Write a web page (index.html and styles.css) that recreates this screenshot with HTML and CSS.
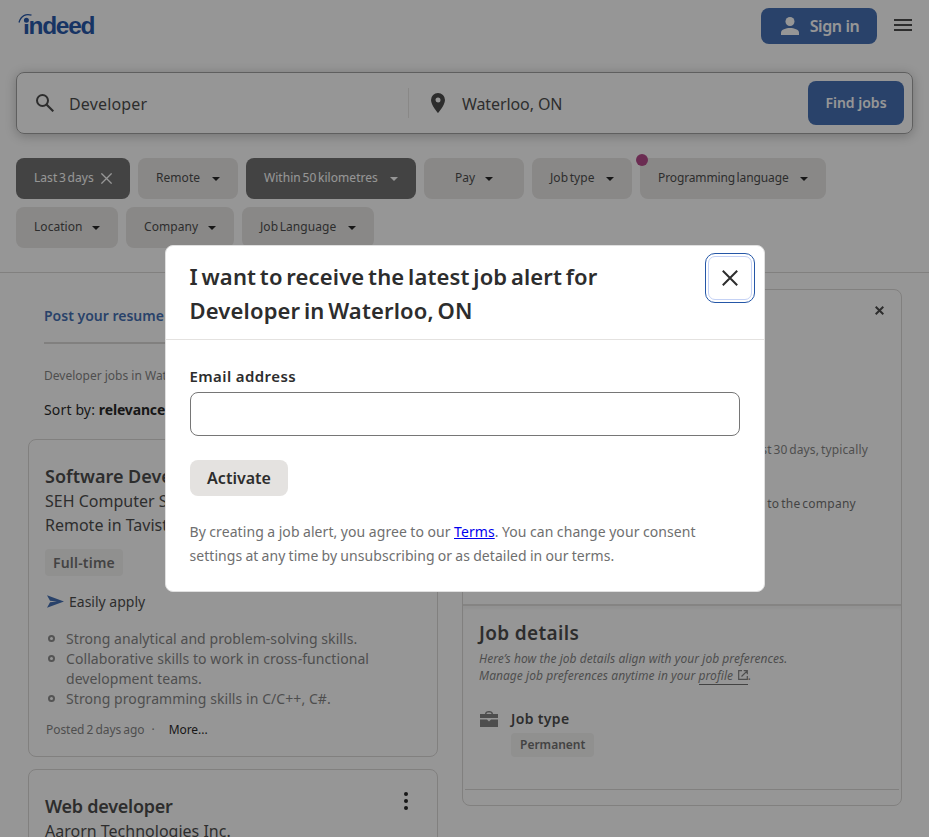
FILE: index.html
```html
<!DOCTYPE html>
<html lang="en">
<head>
<meta charset="utf-8">
<title>Developer jobs in Waterloo, ON | Indeed</title>
<link rel="stylesheet" href="styles.css">
</head>
<body>
<div class="page">
  <header class="header">
    <div class="logo">
      <span class="logo-text">ındeed</span>
      <svg class="logo-arc" width="20" height="14" viewBox="0 0 20 14"><path d="M1 9.500C3 2.500 8 .5 13.500 2.200" fill="none" stroke="#003a9b" stroke-width="1.300"/><circle cx="8.400" cy="7.200" r="3.200" fill="#003a9b" stroke="#fff" stroke-width="1.400"/></svg>
    </div>
    <div class="header-actions">
      <button class="btn signin"><svg width="18" height="18" viewBox="0 0 18 18"><circle cx="9" cy="4.500" r="4.500" fill="currentColor"/><path d="M0 18v-2.500C0 12.500 5 11 9 11s9 1.500 9 4.500V18z" fill="currentColor"/></svg><span>Sign in</span></button>
      <svg class="menu" width="18" height="12" viewBox="0 0 18 12"><path d="M0 0h18v2H0zM0 5h18v2H0zM0 10h18v2H0z" fill="#2d2d2d"/></svg>
    </div>
  </header>
  <div class="search">
    <div class="field what"><svg width="18" height="18" viewBox="0 0 18 18"><circle cx="6.500" cy="6.500" r="5.500" fill="none" stroke="#2d2d2d" stroke-width="2"/><path d="M10.500 10.500l6.800 6.800" stroke="#2d2d2d" stroke-width="2.200"/></svg><span>Developer</span></div>
    <div class="field where"><svg width="14" height="20" viewBox="0 0 14 20"><path fill="#2d2d2d" fill-rule="evenodd" d="M7 0a7 7 0 0 0-7 7c0 5.200 7 13 7 13s7-7.800 7-13a7 7 0 0 0-7-7zm0 4.500a2.500 2.500 0 1 1 0 5 2.500 2.500 0 0 1 0-5z"/></svg><span>Waterloo, ON</span></div>
    <button class="btn find">Find jobs</button>
  </div>
  <div class="filters">
    <div class="row">
      <div class="chip dark w114"><span>Last 3 days</span><svg width="11" height="11" viewBox="0 0 11 11"><path d="M.4.4l10.200 10.200M10.600.4L.4 10.600" stroke="#fff" stroke-width="1.300"/></svg></div>
      <div class="chip w100"><span>Remote</span><i></i></div>
      <div class="chip dark w170"><span>Within 50 kilometres</span><i></i></div>
      <div class="chip w100 pay"><span>Pay</span><i></i></div>
      <div class="chip w100"><span>Job type</span><i></i></div>
      <div class="chip w186 marked"><span>Programming language</span><i></i></div>
    </div>
    <div class="row">
      <div class="chip w102"><span>Location</span><i></i></div>
      <div class="chip w108"><span>Company</span><i></i></div>
      <div class="chip w132"><span>Job Language</span><i></i></div>
    </div>
  </div>
  <main class="content">
    <section class="results">
      <div class="intro">
        <a class="resume">Post your resume</a>
        <div class="jobs-in">Developer jobs in Waterloo, ON</div>
        <div class="sort">Sort by: <b>relevance</b></div>
      </div>
      <article class="card first">
        <h2>Software Developer</h2>
        <div class="line">SEH Computer Systems</div>
        <div class="line">Remote in Tavistock, ON</div>
        <span class="tag">Full-time</span>
        <div class="easy"><svg width="17" height="13" viewBox="0 0 17 13"><path d="M0 .3L17 6.500 0 12.700 3 7.300 10 6.500 3 5.700z" fill="#2557a7"/></svg><span>Easily apply</span></div>
        <ul>
          <li>Strong analytical and problem-solving skills.</li>
          <li>Collaborative skills to work in cross-functional<br>development teams.</li>
          <li>Strong programming skills in C/C++, C#.</li>
        </ul>
        <div class="meta"><span>Posted 2 days ago</span><span class="sep">·</span><a>More...</a></div>
      </article>
      <article class="card second">
        <div class="card-head"><h2>Web developer</h2><svg width="4" height="18" viewBox="0 0 4 18"><circle cx="2" cy="2" r="2"/><circle cx="2" cy="9" r="2"/><circle cx="2" cy="16" r="2"/></svg></div>
        <div class="line">Aarorn Technologies Inc.</div>
      </article>
    </section>
    <section class="detail">
      <div class="detail-top">
        <svg class="detail-close" width="9" height="9" viewBox="0 0 9 9"><path d="M.7.7l7.600 7.600M8.300.7L.7 8.300" stroke="#2d2d2d" stroke-width="2"/></svg>
        <p class="activity">past 30 days, typically</p>
        <p class="apply-note">applying to the company</p>
      </div>
      <div class="detail-body">
        <h3>Job details</h3>
        <p class="prefs">Here’s how the job details align with your job preferences.<br>Manage job preferences anytime in your <a>profile <svg width="10" height="10" viewBox="0 0 10 10"><path d="M4 .7H.7v8.600h8.600V6M5.700.7h3.600v3.600M9.200.8L3.500 6.500" fill="none" stroke="#6f6f6f" stroke-width="1.200"/></svg></a>.</p>
        <div class="jobtype">
          <svg width="18" height="16" viewBox="0 0 18 16"><path fill="#6f6f6f" fill-rule="evenodd" d="M5 3C5 1 6.500 0 9 0s4 1 4 3h5v4H0V3zm1.500 0h5C11.500 1.800 10.500 1.400 9 1.400S6.500 1.800 6.500 3zM0 8.500h7l2 2 2-2h7V16H0z"/></svg>
          <div><h4>Job type</h4><span class="tag small">Permanent</span></div>
        </div>
      </div>
      <div class="detail-rule"></div>
    </section>
  </main>
</div>
<div class="overlay">
  <div class="modal" role="dialog" aria-modal="true">
    <div class="modal-head">
      <h1>I want to receive the latest job alert for<br>Developer in Waterloo, ON</h1>
      <button class="close" aria-label="Close"><svg width="16" height="16" viewBox="0 0 16 16"><path d="M.8.8l14.400 14.400M15.200.8L.8 15.200" stroke="#2d2d2d" stroke-width="2"/></svg></button>
    </div>
    <div class="modal-body">
      <label for="email">Email address</label>
      <input id="email" type="email">
      <button class="activate">Activate</button>
      <p><span class="l1">By creating a job alert, you agree to our <a href="#">Terms</a>. You can change your consent</span><br><span class="l2">settings at any time by unsubscribing or as detailed in our terms.</span></p>
    </div>
  </div>
</div>
</body>
</html>
```

FILE: styles.css
```css
* { box-sizing: border-box; }
html, body { margin: 0; height: 837px; overflow: hidden; }
body { font-family: "Noto Sans", "Open Sans", sans-serif; color: #2d2d2d; background: #fff; white-space: nowrap; }
h1, h2, h3, h4, p, ul { margin: 0; padding: 0; }
button { font-family: inherit; border: 0; padding: 0; }
svg { display: block; flex: none; }

.page { height: 837px; overflow: hidden; }
.header { height: 52px; padding: 8px 17px 0 18px; display: flex; justify-content: space-between; align-items: flex-start; }
.logo { position: relative; height: 36px; }
.logo-text { display: block; margin-left: 5px; font: bold 24.500px/36px "Liberation Sans", sans-serif; letter-spacing: -1.300px; color: #003a9b; }
.logo-arc { position: absolute; left: 0; top: 5px; }
.header-actions { display: flex; align-items: center; gap: 17px; }
.menu { margin-top: -2px; }
.btn { background: #2557a7; color: #fff; border-radius: 8px; font-weight: 600; display: flex; align-items: center; justify-content: center; }
.signin { width: 116px; height: 36px; padding-left: 2px; gap: 11px; font-size: 16px; letter-spacing: -.4px; }

.search { margin: 20px 16px 0; height: 62px; border: 1px solid #919191; border-radius: 8px; display: flex; align-items: center; padding: 0 8px 0 19px; box-shadow: 0 2px 12px rgba(45, 45, 45, .35); }
.field { display: flex; align-items: center; height: 30px; font-size: 16px; }
.field span { margin-top: 2px; }
.what { width: 373px; gap: 15px; border-right: 1px solid #e4e2e0; letter-spacing: .15px; }
.where { flex: 1; padding-left: 22px; gap: 17px; letter-spacing: -.1px; }
.find { width: 96px; height: 44px; font-size: 14px; padding-bottom: 1px; }

.filters { height: 139px; padding: 24px 16px 0; border-bottom: 1px solid #d4d2d0; display: flex; flex-direction: column; gap: 8px; }
.row { display: flex; gap: 8px; }
.chip { height: 41px; border-radius: 8px; background: #e4e2e0; display: flex; align-items: center; justify-content: space-between; padding: 0 18px; font-size: 12px; word-spacing: -1.500px; position: relative; }
.chip span { margin-top: -2px; letter-spacing: .05px; }
.chip i { border: 4px solid transparent; border-top-color: #000; border-bottom: 0; margin-top: 1px; }
.dark { background: #595959; color: #fff; }
.dark i { border-top-color: #fff; }
.w100 { width: 100px; } .w102 { width: 102px; } .w108 { width: 108px; } .w114 { width: 114px; }
.w132 { width: 132px; } .w170 { width: 170px; } .w186 { width: 186px; }
.pay { padding: 0 31px; }
.marked span { letter-spacing: -.12px; }
.marked::before { content: ""; position: absolute; left: -4px; top: -4px; width: 12px; height: 12px; border-radius: 50%; background: #a92b76; }

.content { display: flex; padding: 16px 27px 0 28px; gap: 24px; align-items: flex-start; }
.results { width: 410px; }
.intro { height: 150px; padding: 16px 16px 0; }
.resume { display: block; height: 39px; border-bottom: 2px solid #d4d2d0; font-size: 14px; line-height: 22px; font-weight: 600; color: #2557a7; }
.jobs-in { margin-top: 22px; font-size: 12px; line-height: 20px; color: #6f6f6f; }
.sort { margin-top: 14px; font-size: 14px; line-height: 20px; color: #000; letter-spacing: .15px; }
.sort b { letter-spacing: -.15px; }
.card { border: 1px solid #d4d2d0; border-radius: 8px; padding: 23px 16px 0; }
.first { height: 318px; }
.second { height: 200px; margin-top: 12px; }
h2 { font-size: 18px; line-height: 26px; font-weight: 600; }
.second h2 { letter-spacing: -.25px; }
.line { font-size: 16px; line-height: 24px; }
.tag { display: block; width: 78px; height: 27px; margin-top: 12px; padding-left: 8px; border-radius: 4px; background: #f3f2f1; color: #595959; font-size: 14px; line-height: 27px; font-weight: 600; letter-spacing: .2px; }
.easy { display: flex; align-items: center; gap: 5px; padding-left: 2px; height: 20px; margin-top: 15px; font-size: 14px; }
.card ul { list-style: none; margin-top: 18px; font-size: 14px; line-height: 20px; letter-spacing: .07px; color: #6f6f6f; }
.card li { position: relative; padding-left: 21px; }
.card li::before { content: ""; box-sizing: border-box; position: absolute; left: 3px; top: 6px; width: 7px; height: 7px; border: 2px solid #7a7a7a; border-radius: 50%; }
.meta { display: flex; margin-top: 11px; padding-left: 1px; font-size: 12px; line-height: 20px; word-spacing: -1px; letter-spacing: -.05px; color: #6f6f6f; }
.meta .sep { margin: 0 14px 0 7px; }
.meta a { color: #000; }
.card-head { display: flex; justify-content: space-between; padding-right: 13px; }
.card-head svg { margin-top: -1px; }

.detail { width: 440px; height: 517px; border: 1px solid #d4d2d0; border-radius: 8px; }
.detail-top { height: 314px; padding: 17px 33px 0 0; text-align: right; }
.detail-close { margin: -1px -16px 0 auto; }
.activity { margin-top: 125px; font-size: 12px; line-height: 20px; letter-spacing: .15px; word-spacing: -1.500px; color: #6f6f6f; }
.apply-note { margin-top: 34px; padding-right: 12px; font-size: 12px; line-height: 20px; letter-spacing: .25px; word-spacing: -1.500px; color: #595959; }
.detail-body { height: 185px; padding: 14px 16px 0; border-top: 2px solid #dddbd9; box-shadow: inset 0 3px 3px rgba(0, 0, 0, .04); }
h3 { font-size: 19px; line-height: 26px; font-weight: 600; letter-spacing: .35px; }
.prefs { margin-top: 4px; font-size: 12px; line-height: 17px; letter-spacing: .05px; font-style: italic; color: #6f6f6f; }
.prefs a { display: inline-block; border-bottom: 1px solid #595959; }
.prefs svg { display: inline-block; margin-left: 2px; }
.jobtype { display: flex; gap: 14px; margin-top: 24px; }
.jobtype > svg { margin-top: 2px; margin-left: 1px; margin-right: -1px; }
h4 { margin: 0; font-size: 14px; line-height: 20px; font-weight: 600; letter-spacing: .35px; }
.small { width: 83px; height: 24px; margin-top: 4px; padding-left: 9px; font-size: 12px; line-height: 23px; letter-spacing: 0; }
.detail-rule { margin: 0 2px; border-top: 1px solid #d4d2d0; }

.overlay { position: fixed; inset: 0; background: rgba(45, 45, 45, .5); display: flex; align-items: center; justify-content: center; }
.modal { width: 600px; height: 347px; background: #fff; border: 1px solid #e0e0e0; border-radius: 8px; }
.modal-head { height: 94px; padding: 7px 12px 0 24px; border-bottom: 1px solid #e4e2e0; display: flex; justify-content: space-between; }
h1 { margin-top: 6px; font-size: 22px; line-height: 34px; font-weight: 600; letter-spacing: .15px; word-spacing: -2.200px; }
.close { width: 44px; height: 44px; margin-top: 3px; border: 1px solid #c5d2f5; border-radius: 7px; background: #fff; outline: 1px solid #2557a7; outline-offset: 2px; display: flex; align-items: center; justify-content: center; }
.modal-body { padding: 24px 24px 0; }
label { display: block; font-size: 15px; line-height: 24px; font-weight: 600; letter-spacing: .4px; }
input { display: block; width: 550px; height: 44px; margin-top: 4px; border: 1px solid #767676; border-radius: 8px; background: #fff; }
.activate { display: block; width: 98px; height: 36px; margin-top: 24px; padding-left: 1px; border-radius: 8px; background: #e4e2e0; color: #2d2d2d; font-size: 16px; font-weight: 600; }
.modal p { margin-top: 24px; font-size: 14px; line-height: 24px; color: #6f6f6f; }
.l1 { letter-spacing: .08px; word-spacing: -.3px; }
.l2 { letter-spacing: .05px; word-spacing: -.5px; }
.modal a { color: #0000ee; }
```
